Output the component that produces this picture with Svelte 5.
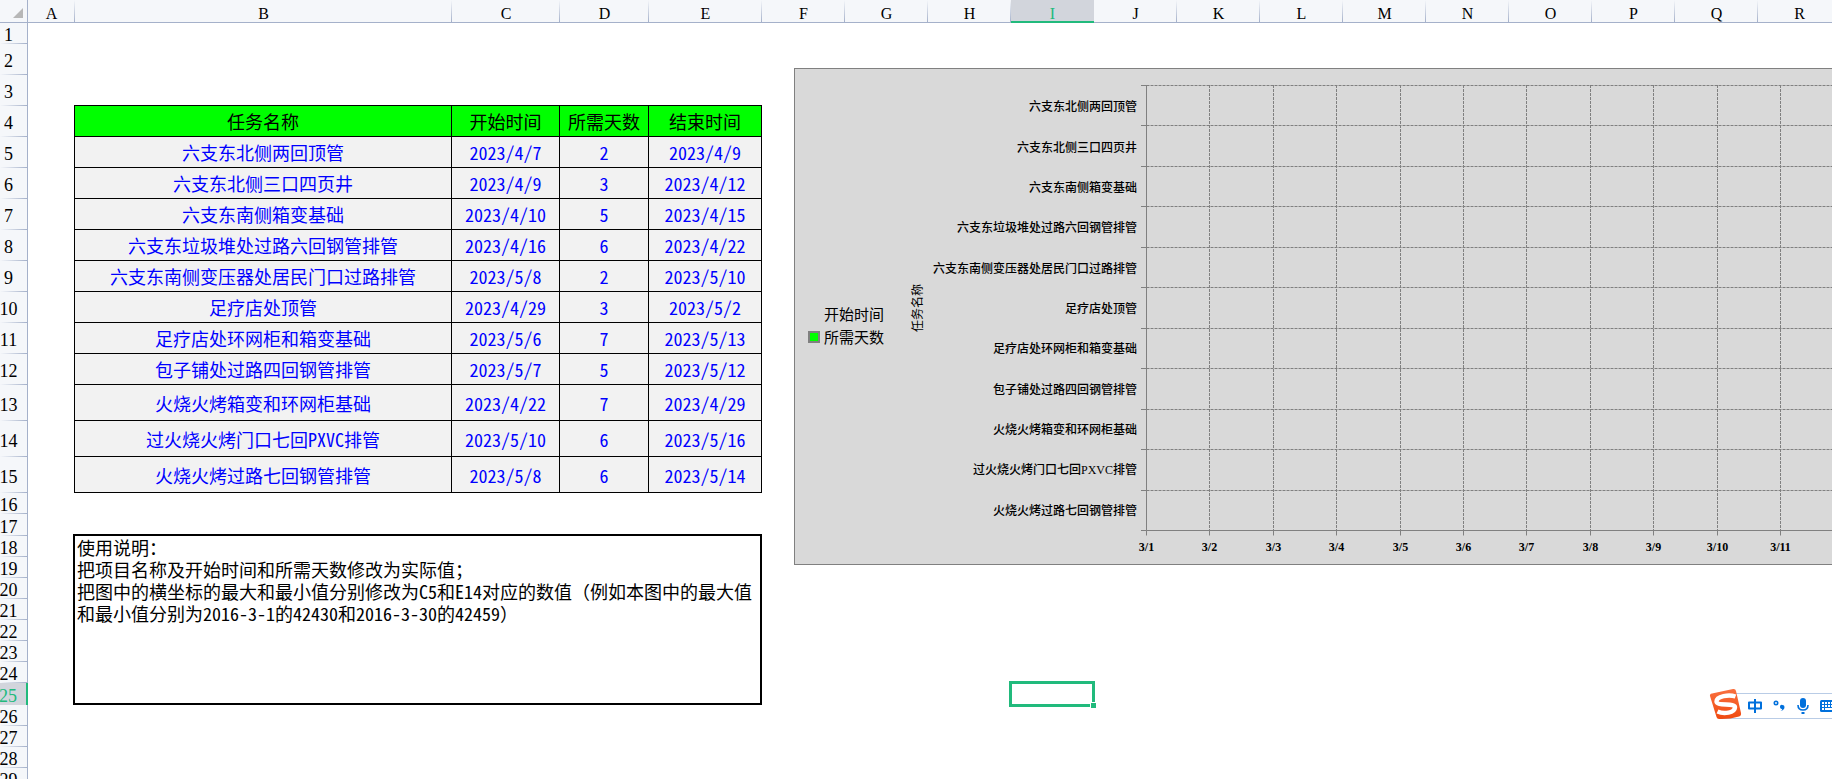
<script>
	const columns = [
		{ name: 'A', width: 47 },
		{ name: 'B', width: 377 },
		{ name: 'C', width: 108 },
		{ name: 'D', width: 89 },
		{ name: 'E', width: 113 },
		...'FGHIJKLMNOPQR'.split('').map((name) => ({ name, width: 83 }))
	];

	const rowHeights = [
		21, 31, 31, 31, 31, 31, 31, 31, 31, 31,
		31, 31, 36, 36, 36, 21, 22, 21, 21, 21,
		21, 21, 21, 21, 22, 21, 21, 21, 21
	];

	const selected = { column: 'I', row: 25 };

	const tasks = [
		{ name: '六支东北侧两回顶管', start: '2023/4/7', days: 2, end: '2023/4/9' },
		{ name: '六支东北侧三口四页井', start: '2023/4/9', days: 3, end: '2023/4/12' },
		{ name: '六支东南侧箱变基础', start: '2023/4/10', days: 5, end: '2023/4/15' },
		{ name: '六支东垃圾堆处过路六回钢管排管', start: '2023/4/16', days: 6, end: '2023/4/22' },
		{ name: '六支东南侧变压器处居民门口过路排管', start: '2023/5/8', days: 2, end: '2023/5/10' },
		{ name: '足疗店处顶管', start: '2023/4/29', days: 3, end: '2023/5/2' },
		{ name: '足疗店处环网柜和箱变基础', start: '2023/5/6', days: 7, end: '2023/5/13' },
		{ name: '包子铺处过路四回钢管排管', start: '2023/5/7', days: 5, end: '2023/5/12' },
		{ name: '火烧火烤箱变和环网柜基础', start: '2023/4/22', days: 7, end: '2023/4/29' },
		{ name: '过火烧火烤门口七回PXVC排管', start: '2023/5/10', days: 6, end: '2023/5/16' },
		{ name: '火烧火烤过路七回钢管排管', start: '2023/5/8', days: 6, end: '2023/5/14' }
	];

	const columnTemplate = '28px ' + columns.map((c) => c.width + 'px').join(' ');
	const rowTemplate = '23px ' + rowHeights.map((h) => h + 'px').join(' ');

	// chart axes, in svg units; the tick marks take up the first 5 units
	const plotHeight = 445;
	const axisX = 5.5;
	const days = Array.from({ length: 11 }, (_, i) => ({
		label: '3/' + (i + 1),
		x: axisX + Math.round((i * 634) / 10)
	}));
	const bands = Array.from({ length: 12 }, (_, i) => 0.5 + Math.round((i * plotHeight) / 11));
	const bottom = bands[11];
</script>

<main class="sheet" style="grid-template-columns: {columnTemplate}; grid-template-rows: {rowTemplate}">
	<div class="corner">
		<svg width="10" height="10" viewBox="0 0 10 10"><path d="M10 0V10H0Z" fill="#b7b7b7" /></svg>
	</div>

	{#each columns as column, i}
		<div class="column-head" class:active={column.name === selected.column} style="grid-column: {i + 2}">
			{column.name}
		</div>
	{/each}

	{#each rowHeights as _, i}
		<div class="row-head" class:active={i + 1 === selected.row} style="grid-row: {i + 2}">{i + 1}</div>
	{/each}

	<table class="tasks">
		<colgroup>
			<col style="width: 378px" />
			<col style="width: 108px" />
			<col style="width: 89px" />
			<col style="width: 113px" />
		</colgroup>
		<thead>
			<tr>
				<th>任务名称</th>
				<th>开始时间</th>
				<th>所需天数</th>
				<th>结束时间</th>
			</tr>
		</thead>
		<tbody>
			{#each tasks as task, i}
				<tr class:tall={i > 7}>
					<td>{task.name}</td>
					<td>{task.start}</td>
					<td>{task.days}</td>
					<td>{task.end}</td>
				</tr>
			{/each}
		</tbody>
	</table>

	<section class="notes">
		<p>使用说明：</p>
		<p>把项目名称及开始时间和所需天数修改为实际值；</p>
		<p>把图中的横坐标的最大和最小值分别修改为C5和E14对应的数值（例如本图中的最大值和最小值分别为2016-3-1的42430和2016-3-30的42459）</p>
	</section>

	<section class="chart">
		<ul class="legend">
			<li><i></i>开始时间</li>
			<li><i class="filled"></i>所需天数</li>
		</ul>
		<div class="axis-title">任务名称</div>
		<div class="categories">
			{#each tasks as task}
				<span>{task.name}</span>
			{/each}
		</div>
		<svg class="plot" height="479">
			{#each bands as y, i}
				<line x1="0" x2={axisX} y1={y} y2={y} />
				{#if i < 11}
					<line class="dashed" x1={axisX} x2="100%" y1={y} y2={y} />
				{/if}
			{/each}
			{#each days as day, i}
				{#if i > 0}
					<line class="dashed" x1={day.x} x2={day.x} y1="0" y2={bottom} />
				{/if}
				<line x1={day.x} x2={day.x} y1={bottom} y2={bottom + 5} />
				<text x={day.x} y={bottom + 20}>{day.label}</text>
			{/each}
			<line x1={axisX} x2={axisX} y1="0" y2={bottom} />
			<line x1={axisX} x2="100%" y1={bottom} y2={bottom} />
		</svg>
	</section>

	<div class="selection"></div>

	<div class="ime">
		<svg class="logo" width="34" height="32" viewBox="0 0 34 32">
			<defs>
				<linearGradient id="logo-fill" x1="0" y1="0" x2="0" y2="1">
					<stop offset="0" stop-color="#f9703f" />
					<stop offset="1" stop-color="#f04a10" />
				</linearGradient>
			</defs>
			<path d="M3 5.500L24 1Q26.500.500 27 3L32 25Q32.500 27.500 30 28.500Q20 31.500 10 31Q8 31 7.500 29L1 8Q.500 6 3 5.500Z" fill="url(#logo-fill)" />
			<path d="M26.500 8.500C20 6.300 7.500 8 7.500 13.500C7.500 18.500 26.500 14.500 26 19.500C25.500 24.800 15 26.500 8.500 23.500" fill="none" stroke="#fff" stroke-width="4.400" />
		</svg>
		<button aria-label="中文">
			<svg width="14" height="14" viewBox="0 0 14 14">
				<path d="M1 3.500H13V9.500H1ZM7 0V14" fill="none" stroke="#0070dc" stroke-width="2" stroke-linejoin="round" />
			</svg>
		</button>
		<button aria-label="标点">
			<svg width="12" height="14" viewBox="0 0 12 14">
				<circle cx="3" cy="4" r="1.700" fill="none" stroke="#0070dc" stroke-width="1.600" />
				<path d="M9.500 6A2 2 0 1 0 9.300 9.900Q9 11.200 7.500 12Q11.500 11.200 11.500 8A2 2 0 0 0 9.500 6Z" fill="#0070dc" />
			</svg>
		</button>
		<button aria-label="语音">
			<svg width="12" height="16" viewBox="0 0 12 16">
				<rect x="3" y="0" width="6" height="10" rx="3" fill="#0070dc" />
				<path d="M1 7Q1 12 6 12Q11 12 11 7" fill="none" stroke="#0070dc" stroke-width="1.600" />
				<path d="M4.500 14H7.500V16H4.500Z" fill="#0070dc" />
			</svg>
		</button>
		<button class="keyboard" aria-label="软键盘">
			<svg width="18" height="12" viewBox="0 0 18 12">
				<rect width="18" height="12" rx="1.500" fill="#0070dc" />
				<path d="M2 2H4V4H2ZM5 2H7V4H5ZM8 2H10V4H8ZM11 2H13V4H11ZM14 2H16V4H14ZM2 5H4V7H2ZM5 5H7V7H5ZM8 5H10V7H8ZM11 5H13V7H11ZM14 5H16V7H14ZM2 8H4V10H2ZM5 8H13V10H5ZM14 8H16V10H14Z" fill="#fff" />
			</svg>
		</button>
	</div>
</main>

<style>
	:global(body) {
		margin: 0;
		background: #fff;
	}

	.sheet {
		--cjk: 'Noto Sans Mono CJK SC', 'Liberation Sans', 'Noto Sans CJK SC', sans-serif;
		--head: #f5f7fa;
		--head-line: #a5b1ca;
		--green: #21ba7c;

		display: grid;
		position: relative;
		height: 100vh;
		overflow: hidden;
		color: #000;
		font-family: var(--cjk);
	}

	.corner {
		grid-area: 1 / 1;
		display: flex;
		align-items: flex-end;
		justify-content: flex-end;
		padding: 0 4px 4px 0;
		background: var(--head);
		border-right: 1px solid var(--head-line);
		border-bottom: 1px solid var(--head-line);
	}

	.column-head,
	.row-head {
		box-sizing: border-box;
		font-family: 'Liberation Serif', serif;
		font-size: 18px;
		text-align: center;
	}

	.column-head {
		grid-row: 1;
		padding-top: 5px;
		font-size: 16px;
		line-height: 18px;
		border-bottom: 1px solid var(--head-line);
		background: linear-gradient(transparent, var(--head-line)) right / 1px 100% no-repeat var(--head);
	}

	.row-head {
		grid-column: 1;
		display: flex;
		align-items: center;
		justify-content: center;
		padding: 3px 10px 0 0;
		line-height: 18px;
		border-right: 1px solid var(--head-line);
		background: linear-gradient(90deg, transparent, var(--head-line)) bottom / 100% 1px no-repeat var(--head);
	}

	.column-head.active {
		color: var(--green);
		border-bottom: 2px solid var(--green);
		background: #d2d5dc;
	}

	.row-head.active {
		color: var(--green);
		border-right: 2px solid var(--green);
		background: #d2d5dc;
	}

	.tasks {
		grid-area: 5 / 3 / 17 / 7;
		width: 688px;
		margin: -1px 0 0 -1px;
		table-layout: fixed;
		border-spacing: 0;
		border-top: 1px solid #000;
		font-size: 18px;
		line-height: 20px;
	}

	.tasks th,
	.tasks td {
		box-sizing: border-box;
		height: 31px;
		padding: 0;
		border-right: 1px solid #000;
		border-bottom: 1px solid #000;
		text-align: center;
		font-weight: 400;
		white-space: nowrap;
	}

	.tasks th:first-child,
	.tasks td:first-child {
		border-left: 1px solid #000;
	}

	.tasks th {
		background: #0f0;
	}

	.tasks td {
		background: #f2f2f2;
		color: #00f;
	}

	.tasks .tall td {
		height: 36px;
	}

	.notes {
		grid-area: 19 / 3 / 27 / 7;
		box-sizing: border-box;
		margin: -2px 0 0 -2px;
		padding-left: 2px;
		border: 2px solid #000;
		font-size: 18px;
		line-height: 22px;
	}

	.notes p {
		margin: 0;
	}

	.chart {
		grid-area: 3 / 7 / 22 / -1;
		align-self: start;
		display: flex;
		margin: 24px 0 0 32px;
		padding-top: 16px;
		background: #d9d9d9;
		border: 1px solid #808080;
	}

	.legend {
		width: 106px;
		height: 446px;
		margin: 0;
		padding: 34px 0 0 13px;
		box-sizing: border-box;
		display: flex;
		flex-direction: column;
		justify-content: center;
		list-style: none;
		font-size: 15px;
		font-weight: 300;
		line-height: 23px;
	}

	.legend li {
		display: flex;
		align-items: center;
	}

	.legend i {
		box-sizing: border-box;
		width: 12px;
		height: 12px;
		margin-right: 4px;
	}

	.legend .filled {
		background: #0f0;
		border: 2px solid #808080;
	}

	.axis-title {
		width: 32px;
		height: 446px;
		writing-mode: vertical-rl;
		text-orientation: sideways;
		transform: rotate(180deg);
		text-align: center;
		font-size: 12px;
		font-weight: 500;
		line-height: 32px;
	}

	.categories {
		box-sizing: border-box;
		width: 204px;
		height: 446px;
		padding-top: 2px;
		display: grid;
		grid-auto-rows: 1fr;
		align-items: center;
		justify-items: end;
		font-family: 'Liberation Serif', 'Noto Sans CJK SC', serif;
		font-size: 12px;
		font-weight: 500;
		line-height: 16px;
		white-space: nowrap;
	}

	.plot {
		flex: 1;
		min-width: 0;
		margin-left: 4px;
		overflow: visible;
	}

	.plot line {
		stroke: #808080;
	}

	.plot .dashed {
		stroke-dasharray: 3 1;
	}

	.plot text {
		font: bold 12px 'Liberation Serif', serif;
		text-anchor: middle;
	}

	.selection {
		grid-area: 26 / 10;
		position: relative;
		margin: -2px -1px -2px -2px;
		border: 3px solid var(--green);
	}

	.selection::after {
		content: '';
		position: absolute;
		right: -4px;
		bottom: -4px;
		width: 5px;
		height: 5px;
		background: var(--green);
		outline: 1px solid #fff;
	}

	.ime {
		position: absolute;
		right: 0;
		top: 693px;
		display: flex;
		align-items: center;
		box-sizing: border-box;
		width: 112px;
		height: 26px;
		border: solid #b9cce6;
		border-width: 1px 0;
		background: #fff;
	}

	.ime .logo {
		flex: none;
		margin: -4px 0 0 -11px;
	}

	.ime button {
		flex: none;
		width: 24px;
		display: flex;
		justify-content: center;
		padding: 0;
		border: 0;
		background: none;
	}

	.ime .keyboard {
		width: 28px;
	}
</style>
